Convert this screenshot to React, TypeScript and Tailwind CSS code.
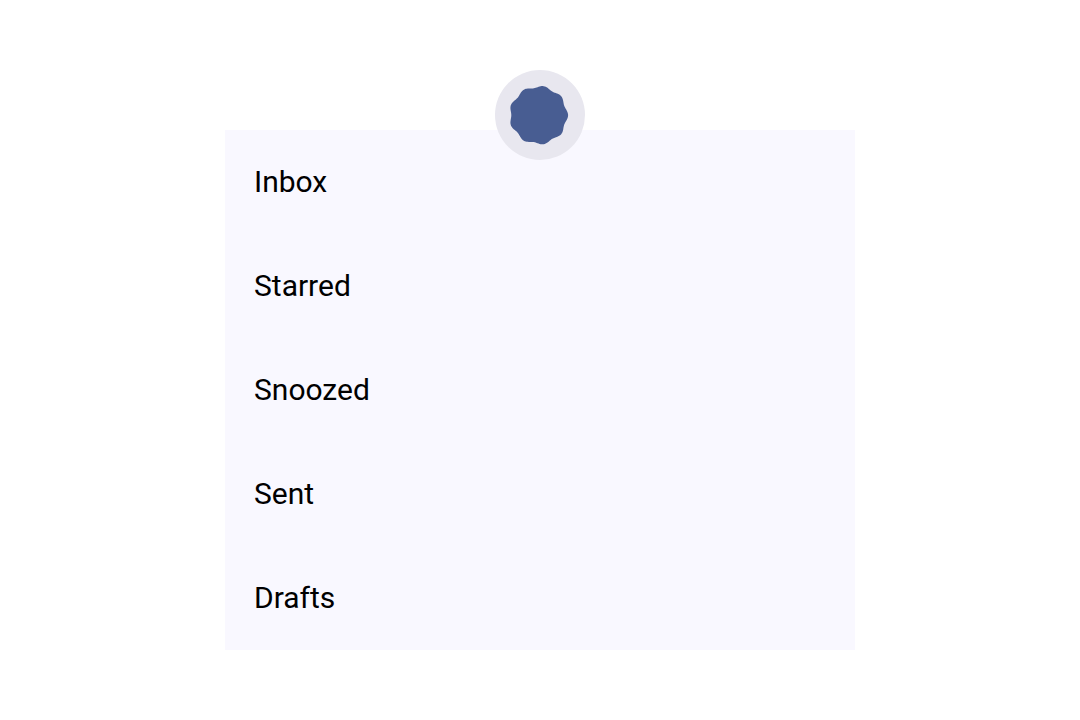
import React from 'react';

const folders = ['Inbox', 'Starred', 'Snoozed', 'Sent', 'Drafts'];

// Nine-lobed "cookie" outline, centred on 0,0
const cookiePath = (lobes: number, radius: number, depth: number) => {
  const steps = 180;
  const points: string[] = [];
  for (let i = 0; i < steps; i++) {
    const angle = (i / steps) * Math.PI * 2;
    const r = radius + depth * Math.cos(angle * lobes);
    points.push(`${(r * Math.cos(angle)).toFixed(2)} ${(r * Math.sin(angle)).toFixed(2)}`);
  }
  return `M${points.join('L')}Z`;
};

const RefreshIndicator: React.FC = () => (
  <div
    role="progressbar"
    aria-label="Refreshing"
    className="absolute bottom-full left-1/2 -mb-[30px] -translate-x-1/2 rounded-full bg-[#e8e7ef]"
  >
    <svg viewBox="-46.4 -45.2 90 90" className="block size-[90px]" aria-hidden="true">
      <path d={cookiePath(9, 28.4, 1.1)} transform="translate(-2.8)" fill="#485d92" />
    </svg>
  </div>
);

export default function App() {
  return (
    <main className="min-h-screen bg-white pt-[130px] font-[Roboto,sans-serif]">
      <div className="relative mx-auto w-7/12 bg-[#f9f8ff]">
        <ul>
          {folders.map((folder) => (
            <li key={folder} className="flex h-26 items-center px-[29px] pb-0.5 text-[30px] text-black">
              {folder}
            </li>
          ))}
        </ul>
        <RefreshIndicator />
      </div>
    </main>
  );
}
